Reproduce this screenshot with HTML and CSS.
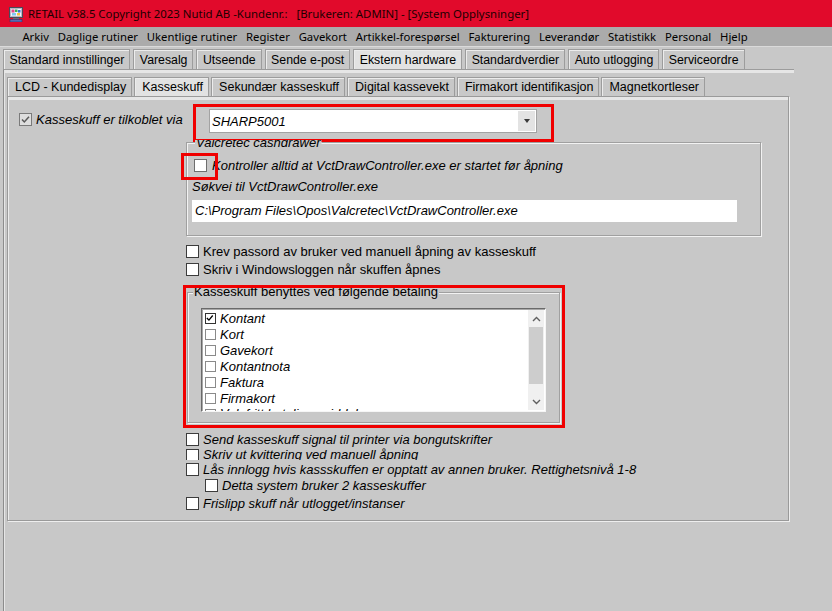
FILE: index.html
```html
<!DOCTYPE html>
<html lang="no">
<head>
<meta charset="utf-8">
<title>RETAIL v38.5</title>
<link rel="stylesheet" href="styles.css">
</head>
<body>
<div class="window">
  <div class="titlebar">
    <svg class="app-icon" viewBox="0 0 14 15" width="14" height="15">
      <rect x="0.5" y="0.5" width="13" height="10" fill="#b9b9c4" stroke="#4a4a5a"/>
      <rect x="2" y="2" width="10" height="7" fill="#f2f2ff"/>
      <rect x="2.5" y="2.5" width="3" height="3" fill="#e04a8a"/>
      <rect x="6" y="2.5" width="2.5" height="2.5" fill="#3cb44a"/>
      <rect x="9" y="3" width="2.5" height="2.5" fill="#3a6fd8"/>
      <rect x="3" y="6" width="4" height="2.5" fill="#7fc8f0"/>
      <rect x="8" y="6" width="3" height="2.5" fill="#f0c040"/>
      <rect x="4" y="11" width="6" height="1.5" fill="#6a6a78"/>
      <rect x="1" y="12.5" width="12" height="2.5" fill="#5a6ab0" stroke="#2c3470" stroke-width="0.6"/>
    </svg>
    <span class="title-text">RETAIL v38.5 Copyright 2023 Nutid AB -Kundenr.:</span>
    <span class="title-text title-user">[Brukeren: ADMIN] - [System Opplysninger]</span>
  </div>

  <nav class="menubar">
    <span class="menu-item">Arkiv</span>
    <span class="menu-item">Daglige rutiner</span>
    <span class="menu-item">Ukentlige rutiner</span>
    <span class="menu-item">Register</span>
    <span class="menu-item">Gavekort</span>
    <span class="menu-item">Artikkel-forespørsel</span>
    <span class="menu-item">Fakturering</span>
    <span class="menu-item">Leverandør</span>
    <span class="menu-item">Statistikk</span>
    <span class="menu-item">Personal</span>
    <span class="menu-item">Hjelp</span>
  </nav>

  <div class="tabs-outer">
    <div class="tabrow tabrow-main">
      <div class="tab">Standard innstillinger</div>
      <div class="tab">Varesalg</div>
      <div class="tab">Utseende</div>
      <div class="tab">Sende e-post</div>
      <div class="tab tab-active">Ekstern hardware</div>
      <div class="tab">Standardverdier</div>
      <div class="tab">Auto utlogging</div>
      <div class="tab">Serviceordre</div>
    </div>

    <div class="outer-panel">
      <div class="tabrow tabrow-sub">
        <div class="tab">LCD - Kundedisplay</div>
        <div class="tab tab-active">Kasseskuff</div>
        <div class="tab">Sekundær kasseskuff</div>
        <div class="tab">Digital kassevekt</div>
        <div class="tab">Firmakort identifikasjon</div>
        <div class="tab">Magnetkortleser</div>
      </div>

      <div class="panel">
        <div class="row-top">
          <div class="lead">
            <span class="cb cb-disabled-checked">
              <svg viewBox="0 0 11 11" width="11" height="11"><path d="M2 5.5 L4.3 8 L9 2.8" fill="none" stroke="#5a5a5a" stroke-width="1.5"/></svg>
            </span>
            <span class="it">Kasseskuff er tilkoblet via</span>
          </div>
          <div class="combo">
            <span class="combo-text it">SHARP5001</span>
            <span class="combo-btn"><span class="tri"></span></span>
            <span class="mark mark-combo"></span>
          </div>
        </div>

        <div class="col">
          <fieldset class="group group-valc">
            <legend class="legend-clipped it">Valcretec cashdrawer</legend>
            <div class="group-body valc-body">
              <div class="cb-row cb-row-valc">
                <span class="cb-anchor"><span class="cb cb-light"></span><span class="mark mark-cb"></span></span>
                <span class="it">Kontroller alltid at VctDrawController.exe er startet før åpning</span>
              </div>
              <div class="field-label it">Søkvei til VctDrawController.exe</div>
              <div class="textfield it">C:\Program Files\Opos\Valcretec\VctDrawController.exe</div>
            </div>
          </fieldset>

          <div class="cb-row first-after-group"><span class="cb"></span><span>Krev passord av bruker ved manuell åpning av kasseskuff</span></div>
          <div class="cb-row gap2"><span class="cb"></span><span>Skriv i Windowsloggen når skuffen åpnes</span></div>

          <div class="pay-wrap">
            <fieldset class="group group-pay">
              <legend>Kasseskuff benyttes ved følgende betaling</legend>
              <div class="listbox">
                <div class="list-items">
                  <div class="li"><span class="lcb lcb-checked"><svg viewBox="0 0 11 11" width="9" height="9"><path d="M1 4.8 L3.6 7.5 L8.2 1.8" fill="none" stroke="#000" stroke-width="1.6"/></svg></span><span class="it">Kontant</span></div>
                  <div class="li"><span class="lcb"></span><span class="it">Kort</span></div>
                  <div class="li"><span class="lcb"></span><span class="it">Gavekort</span></div>
                  <div class="li"><span class="lcb"></span><span class="it">Kontantnota</span></div>
                  <div class="li"><span class="lcb"></span><span class="it">Faktura</span></div>
                  <div class="li"><span class="lcb"></span><span class="it">Firmakort</span></div>
                  <div class="li li-partial"><span class="lcb"></span><span class="it">Valgfritt betalingsmiddel</span></div>
                </div>
                <div class="scrollbar">
                  <span class="sb-btn"><svg viewBox="0 0 9 6" width="9" height="6"><path d="M1 5 L4.5 1.5 L8 5" fill="none" stroke="#606060" stroke-width="1.4"/></svg></span>
                  <span class="sb-thumb"></span>
                  <span class="sb-track"></span>
                  <span class="sb-btn"><svg viewBox="0 0 9 6" width="9" height="6"><path d="M1 1 L4.5 4.5 L8 1" fill="none" stroke="#606060" stroke-width="1.4"/></svg></span>
                </div>
              </div>
            </fieldset>
            <span class="mark mark-pay"></span>
          </div>

          <div class="cb-row send-row"><span class="cb"></span><span class="it">Send kasseskuff signal til printer via bongutskrifter</span></div>
          <div class="cb-row clipped-row"><span class="cb"></span><span class="it">Skriv ut kvittering ved manuell åpning</span></div>
          <div class="cb-row gap1"><span class="cb"></span><span class="it">Lås innlogg hvis kassskuffen er opptatt av annen bruker. Rettighetsnivå 1-8</span></div>
          <div class="cb-row indent"><span class="cb"></span><span class="it">Detta system bruker 2 kasseskuffer</span></div>
          <div class="cb-row gap2"><span class="cb"></span><span class="it">Frislipp skuff når utlogget/instanser</span></div>
        </div>
      </div>
    </div>
  </div>
</div>
</body>
</html>
```

FILE: styles.css
```css
* { box-sizing: border-box; }

html, body { margin: 0; padding: 0; }

body {
  width: 832px;
  height: 611px;
  overflow: hidden;
  background: #c8c8c8;
  font-family: "Liberation Sans", Arial, sans-serif;
  font-size: 13px;
  color: #000;
}

.it { font-style: italic; }

/* ---------- title bar ---------- */
.titlebar {
  height: 27px;
  background: #e10a2b;
  display: flex;
  align-items: center;
  padding-left: 9px;
  font-family: "Noto Sans", "Segoe UI", sans-serif;
  font-size: 11.4px;
  color: #1c0000;
  white-space: nowrap;
}
.app-icon { flex: none; margin-right: 5px; margin-top: 1px; }
.title-user { margin-left: 9px; }

/* ---------- menu ---------- */
.menubar {
  height: 20px;
  background: #ababab;
  border-bottom: 1px solid #dadada;
  display: flex;
  align-items: center;
  padding-left: 18px;
  font-family: "Noto Sans", "Segoe UI", sans-serif;
  font-size: 11.3px;
  white-space: nowrap;
}
.menu-item { padding: 0 4.4px; }

/* ---------- tabs ---------- */
.tabs-outer { padding: 2px 0 0 3px; }

.tabrow { display: flex; gap: 3px; }
.tabrow-main { height: 20px; }
.tabrow-sub { height: 19px; gap: 2px; }

.tab {
  font-size: 12.5px;
  padding: 0 5px 0 7px;
  border: 1px solid #9c9c9c;
  border-bottom: none;
  box-shadow: inset 1px 1px 0 #ececec;
  display: flex;
  align-items: center;
  white-space: nowrap;
  background: #c8c8c8;
}
.tabrow-main .tab { font-size: 12.3px; padding: 0 5px 0 5.5px; }
.tab-active { background: #e2e2e2; }

.outer-panel {
  width: 791px;
  height: 542px;
  border-top: 1px solid #9c9c9c;
  border-left: 1px solid #8c8c8c;
  box-shadow: inset 0 3px 0 #e6e6e6, inset 1px 0 0 #e6e6e6;
  padding: 7px 0 0 3px;
}

.panel {
  width: 782px;
  height: 425px;
  border: 1px solid #9a9a9a;
  box-shadow: inset 0 3px 0 #e6e6e6, inset 1px 0 0 #ececec, 1px 1px 0 #eeeeee;
}

/* ---------- top row ---------- */
.row-top {
  margin-top: 12px;
  height: 24px;
  display: flex;
  align-items: center;
}
.lead {
  width: 201px;
  padding-left: 11px;
  display: flex;
  align-items: center;
  gap: 4px;
  margin-top: -3px;
}

.combo {
  position: relative;
  width: 328px;
  height: 24px;
  background: #fff;
  border: 1px solid #a3a3a3;
  display: flex;
  align-items: center;
}
.combo-text { flex: 1; padding-left: 2px; }
.combo-btn {
  width: 17px;
  height: 20px;
  margin-right: 1px;
  background: #e3e3e3;
  display: flex;
  align-items: center;
  justify-content: center;
}
.tri {
  width: 0; height: 0;
  border-left: 3.5px solid transparent;
  border-right: 3.5px solid transparent;
  border-top: 4px solid #3a3a3a;
}

/* ---------- red highlight marks (overlays) ---------- */
.mark {
  position: absolute;
  border: 3px solid #f00000;
  pointer-events: none;
}
.mark-combo { left: -17px; right: -18px; top: -6px; bottom: -10px; }
.cb-anchor { position: relative; display: flex; }
.mark-cb { left: -13px; right: -11px; top: -6px; bottom: -8px; }
.pay-wrap { position: relative; margin-top: 7px; margin-left: 1px; width: 373px; }
.mark-pay { left: -4px; right: -5px; top: 1px; bottom: -5px; }

/* ---------- checkboxes ---------- */
.cb {
  flex: none;
  width: 13px;
  height: 13px;
  background: #fff;
  border: 1px solid #3c3c3c;
  display: flex;
  align-items: center;
  justify-content: center;
}
.cb-light { border-color: #6e6e6e; }
.cb-disabled-checked { background: #dedede; border-color: #7a7a7a; }

.cb-row {
  height: 16px;
  display: flex;
  align-items: center;
  gap: 4px;
  white-space: nowrap;
}
.gap1 { margin-top: 1px; }
.gap2 { margin-top: 2px; }
.first-after-group { margin-top: 7px; }
.send-row { margin-top: 8px; }
.indent { padding-left: 19px; }
.clipped-row { height: 13px; overflow: hidden; align-items: flex-start; }
.clipped-row .cb { margin-top: 2px; }
.clipped-row span:last-child { line-height: 16px; }

/* ---------- column ---------- */
.col { margin-left: 178px; }

.group {
  margin: 0;
  padding: 0;
  min-width: 0;
  border: 1px solid #a0a0a0;
  box-shadow: inset 1px 1px 0 #f2f2f2, 1px 1px 0 #f2f2f2;
}
.group legend {
  padding: 0 1px;
  line-height: 16px;
  background: #c8c8c8;
}

.group-valc {
  margin-top: 2px;
  width: 575px;
}
.valc-body { padding: 0 23px 13px 5px; }
.group-valc legend {
  margin-left: 8px;
  line-height: 15px;
  clip-path: inset(5px 0 0 0);
}
.cb-row-valc { margin-top: 7px; margin-left: 2px; gap: 5px; }
.field-label { margin-top: 6px; height: 16px; line-height: 16px; }
.textfield {
  margin-top: 5px;
  width: 545px;
  height: 22px;
  line-height: 22px;
  background: #fff;
  padding-left: 3px;
  white-space: nowrap;
}

.group-pay { width: 373px; }
.group-pay legend { margin-left: 5px; }

/* ---------- listbox ---------- */
.listbox {
  margin: 8px 0 10px 13px;
  width: 345px;
  height: 104px;
  background: #fff;
  border-top: 1px solid #6a6a6a;
  border-left: 1px solid #6a6a6a;
  border-right: 1px solid #f6f6f6;
  border-bottom: 1px solid #f6f6f6;
  box-shadow: inset 1px 1px 0 #a8a8a8;
  display: flex;
  overflow: hidden;
}
.list-items { flex: 1; padding-top: 1px; overflow: hidden; }
.li {
  height: 16px;
  display: flex;
  align-items: center;
  padding-left: 3px;
  gap: 4px;
  white-space: nowrap;
}
.li-partial { height: 6px; overflow: hidden; align-items: flex-start; }
.li-partial .lcb { margin-top: 3px; }
.lcb {
  flex: none;
  width: 11px;
  height: 11px;
  border: 1px solid #8a8a8a;
  background: #fff;
  display: flex;
  align-items: center;
  justify-content: center;
}
.lcb-checked { border-color: #333; }

.scrollbar {
  width: 16px;
  margin: 1px 1px 1px 0;
  background: #f0f0f0;
  display: flex;
  flex-direction: column;
}
.sb-btn {
  height: 17px;
  display: flex;
  align-items: center;
  justify-content: center;
}
.sb-thumb { height: 57px; background: #cdcdcd; margin: 0 1px; }
.sb-track { flex: 1; }
```
